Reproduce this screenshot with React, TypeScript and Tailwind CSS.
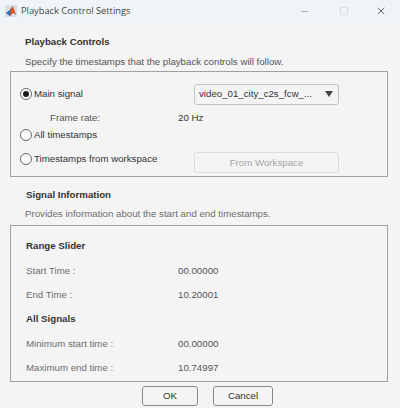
import { Minus, Square, X } from 'lucide-react';

function Radio({ checked }: { checked?: boolean }) {
  return (
    <span className="w-[12px] h-[12px] rounded-full border border-[#6a6a6a] bg-[#fafafa] flex items-center justify-center shrink-0">
      {checked && <span className="w-[6px] h-[6px] rounded-full bg-[#1a1a1a]" />}
    </span>
  );
}

function InfoRow({ label, value }: { label: string; value: string }) {
  return (
    <div className="h-[24.4px] flex items-center pl-[15px]">
      <span className="w-[152px] text-[#6e6e6e]">{label}</span>
      <span className="text-[#555]">{value}</span>
    </div>
  );
}

export default function App() {
  return (
    <div className="w-[400px] h-[408px] bg-[#f4f4f4] overflow-hidden text-[9.7px] leading-[14px] text-[#333] font-['Liberation_Sans',sans-serif]">
      {/* Title bar */}
      <div className="h-[22px] bg-[#eff4f9] flex items-center pl-[5px] font-['Open_Sans',sans-serif] text-[9.3px] text-[#444]">
        <svg width="12" height="12" viewBox="0 0 12 12" className="mr-[4px] shrink-0">
          <rect x="0" y="0" width="12" height="12" fill="#d9dfe6" />
          <path d="M1 8 L4 6 L6 3 L8 1 L11 10 L8 8 L5 11 Z" fill="#d9541e" />
          <path d="M1 8 L4 6 L6 4 L5 11 Z" fill="#2f6db5" />
        </svg>
        <span className="flex-1">Playback Control Settings</span>
        <Minus size={11} strokeWidth={1.4} className="text-[#888] mr-[29px]" />
        <Square size={10} strokeWidth={1.2} className="text-[#c4c4c4] mr-[26px]" />
        <X size={12} strokeWidth={1.4} className="text-[#333] mr-[13px]" />
      </div>

      <div className="pl-[10px] w-[388px]">
        <div className="pt-[13px] pl-[15px] font-bold">Playback Controls</div>
        <div className="mt-[6px] mb-[2px] pl-[15px] text-[#555]">Specify the timestamps that the playback controls will follow.</div>

        {/* Playback panel */}
        <div className="h-[106px] border border-[#a0a0a0] flex flex-col pl-[9px] pt-[11px]">
          <div className="flex items-center h-[22px]">
            <Radio checked />
            <span className="ml-[2px] w-[160px]">Main signal</span>
            <div className="w-[145px] h-[21px] border border-[#c4c4c4] rounded-[3px] flex items-center justify-between pl-[4px] pr-[5px]">
              <span>video_01_city_c2s_fcw_...</span>
              <span className="w-0 h-0 border-l-[4px] border-r-[4px] border-t-[6px] border-l-transparent border-r-transparent border-t-[#444]" />
            </div>
          </div>
          <div className="flex items-center h-[22px] mt-[2px] pl-[30px]">
            <span className="w-[128px] text-[#555]">Frame rate:</span>
            <span>20 Hz</span>
          </div>
          <div className="flex items-center h-[12px]">
            <Radio />
            <span className="ml-[2px]">All timestamps</span>
          </div>
          <div className="flex items-center h-[24px] mt-[6px]">
            <Radio />
            <span className="ml-[2px] w-[160px]">Timestamps from workspace</span>
            <div className="w-[145px] h-[21px] mt-[7px] border border-[#dcdcdc] rounded-[3px] flex items-center justify-center text-[#a5a5a5]">
              From Workspace
            </div>
          </div>
        </div>

        <div className="pt-[11px] pl-[16px] font-bold">Signal Information</div>
        <div className="mt-[5px] mb-[4px] pl-[15px] text-[#6e6e6e]">Provides information about the start and end timestamps.</div>

        {/* Signal panel */}
        <div className="h-[157px] border border-[#a0a0a0] pt-[8px]">
          <div className="h-[24.4px] flex items-center pl-[15px] font-bold">Range Slider</div>
          <InfoRow label="Start Time :" value="00.00000" />
          <InfoRow label="End Time :" value="10.20001" />
          <div className="h-[24.4px] flex items-center pl-[15px] font-bold">All Signals</div>
          <InfoRow label="Minimum start time :" value="00.00000" />
          <InfoRow label="Maximum end time :" value="10.74997" />
        </div>
      </div>

      {/* Buttons */}
      <div className="flex pl-[142px] gap-[15px] pt-[4px]">
        <button className="w-[56px] h-[20px] border border-[#8a8a8a] rounded-[3px] text-center">OK</button>
        <button className="w-[60px] h-[20px] border border-[#8a8a8a] rounded-[3px] text-center">Cancel</button>
      </div>
    </div>
  );
}
